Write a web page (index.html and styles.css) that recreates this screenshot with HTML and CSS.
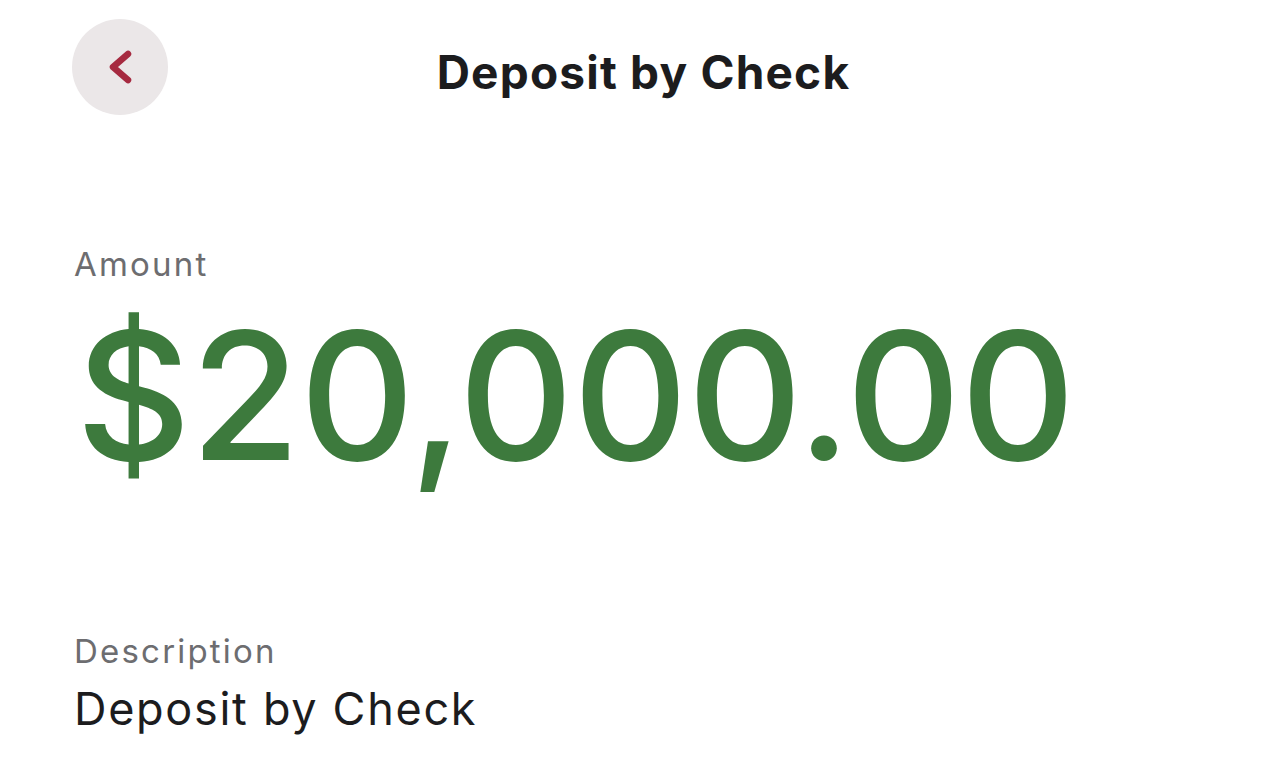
FILE: index.html
```html
<!DOCTYPE html>
<html>
<head>
<meta charset="utf-8">
<link rel="stylesheet" href="styles.css">
</head>
<body>
<div class="screen">
  <header class="topbar">
    <button class="back" aria-label="Back">
      <svg width="28" height="36" viewBox="0 0 28 36"><path d="M22 5 L7 18 L22 31" fill="none" stroke="#a62a40" stroke-width="6.5" stroke-linecap="round" stroke-linejoin="round"/></svg>
    </button>
    <h1 class="title">Deposit by Check</h1>
  </header>
  <section class="field amount-field">
    <div class="label">Amount</div>
    <div class="amount">$20,000.00</div>
  </section>
  <section class="field desc-field">
    <div class="label">Description</div>
    <div class="value">Deposit by Check</div>
  </section>
</div>
</body>
</html>
```
FILE: styles.css
```css
* { box-sizing: border-box; }
html, body { margin: 0; padding: 0; background: #fff; }
body { font-family: Inter, "Noto Sans", sans-serif; color: #1c1c1e; }
.screen { width: 1287px; height: 782px; overflow: hidden; padding: 0 74px; }
.topbar { display: flex; align-items: center; height: 134px; position: relative; }
.back {
  width: 96px; height: 96px; border-radius: 50%; border: none; background: #ebe7e8;
  display: flex; align-items: center; justify-content: center; margin-left: -2px; padding: 0;
}
.back svg { display: block; }
.title {
  position: absolute; left: 0; right: 0; top: 9px; bottom: 0;
  display: flex; align-items: center; justify-content: center; margin: 0;
  font-size: 46px; font-weight: 700; letter-spacing: 1.2px; color: #1c1c1e;
  pointer-events: none;
}
.field { display: flex; flex-direction: column; }
.amount-field { margin-top: 110px; }
.label { font-size: 33px; color: #6d6d70; line-height: 40px; letter-spacing: 2.2px; }
.amount {
  font-size: 178px; font-weight: 500; color: #3d7a3d; line-height: 200px;
  margin-top: 12px; margin-left: 2px; letter-spacing: -0.4px;
}
.desc-field { margin-top: 135px; }
.value { font-size: 45px; line-height: 60px; color: #1c1c1e; letter-spacing: 1.7px; margin-top: 8px; }
```
